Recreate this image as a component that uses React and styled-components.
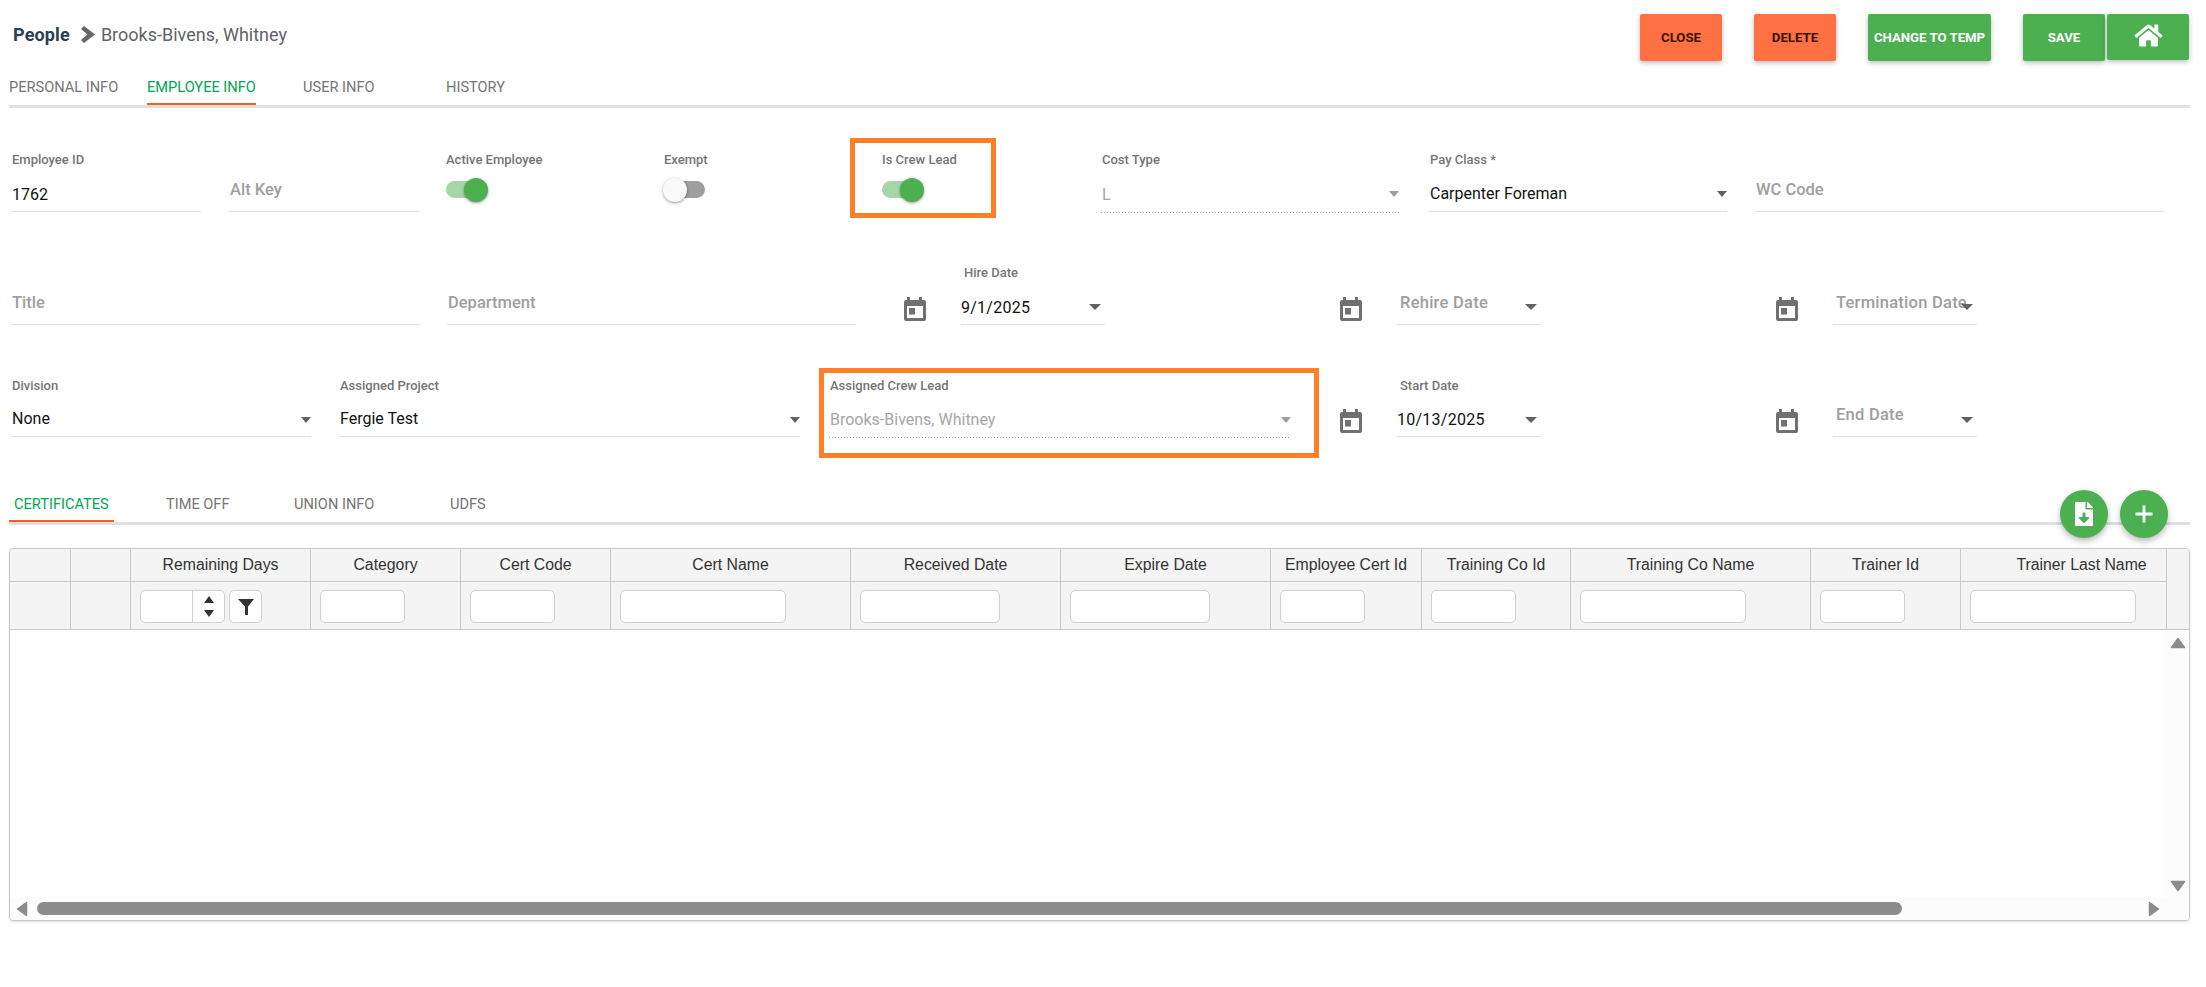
import React from 'react';
import styled, { createGlobalStyle } from 'styled-components';
import { FaHome, FaFileDownload } from 'react-icons/fa';

const Global = createGlobalStyle`
  html, body { margin: 0; padding: 0; background: #fff; }
  body { font-family: Roboto, "Liberation Sans", sans-serif; color: #212121; }
  * { box-sizing: border-box; }
`;

const Page = styled.div`
  width: 2206px;
  height: 987px;
  overflow: hidden;
  background: #fff;
`;

const Header = styled.header`
  display: flex;
  justify-content: space-between;
  height: 70px;
  padding: 14px 17px 0 13px;
`;
const Crumb = styled.div`
  display: flex;
  align-items: center;
  height: 40px;
  font-size: 18px;
  color: #5f6368;
`;
const CrumbArrow = styled.svg`
  width: 14px;
  height: 17px;
  margin: 1px 6px 0 11px;
  fill: #666;
`;
const CrumbRoot = styled.b`
  color: #2c3e50;
  font-weight: 700;
  letter-spacing: .15px;
`;
const Actions = styled.div`
  display: flex;
  align-items: flex-start;
`;
const Btn = styled.button`
  width: ${p => p.$w}px;
  height: ${p => p.$h || 47}px;
  margin-left: ${p => p.$ml}px;
  border: 0;
  border-radius: 2px;
  padding: 0;
  display: flex;
  align-items: center;
  justify-content: center;
  background: ${p => (p.$danger ? '#ff7043' : '#4caf50')};
  color: ${p => (p.$danger ? '#3a1208' : '#fff')};
  font: 700 13.2px Roboto, sans-serif;
  text-transform: uppercase;
  box-shadow: 0 2px 5px rgba(0,0,0,.26);
`;
const HomeIcon = styled(FaHome)`
  width: 31px;
  height: 25px;
  margin-bottom: 4px;
`;

const TabBar = styled.nav`
  position: relative;
  display: flex;
  height: ${p => p.$h}px;
  margin-left: 9px;
  width: 2181px;
  border-bottom: 3px solid #e0e0e0;
`;
const Tab = styled.div`
  width: ${p => p.$w}px;
  flex: none;
  height: ${p => p.$h}px;
  line-height: ${p => p.$lh}px;
  font-size: 14.6px;
  white-space: nowrap;
  color: ${p => (p.$active ? '#00a651' : '#757575')};
`;
const TabLabel = styled.span`
  display: inline-block;
  height: 100%;
  padding: 0 ${p => p.$pad || 0}px;
  border-bottom: ${p => (p.$active ? '2px solid #ff5a1f' : '0')};
`;

const Form = styled.section`
  padding-top: 30px;
`;
const Row = styled.div`
  display: grid;
  grid-template-columns: ${p => p.$cols};
  height: ${p => p.$h}px;
  margin-top: ${p => p.$mt || 0}px;
  padding-left: 11px;
`;
const Cell = styled.div`
  padding-top: ${p => p.$pt}px;
`;
const Highlight = styled.div`
  width: ${p => p.$w}px;
  height: 100%;
  border: 5px solid #ff7f27;
  padding: ${p => p.$pad};
`;
const Field = styled.div`
  width: ${p => (p.$w ? p.$w + 'px' : '100%')};
  height: 60px;
`;
const Label = styled.div`
  height: 16px;
  line-height: 16px;
  padding-left: ${p => (p.$date ? 3 : 1)}px;
  font-size: 13px;
  font-weight: 500;
  white-space: pre;
  color: #757575;
`;
const Control = styled.div`
  position: relative;
  height: 44px;
  display: flex;
  align-items: flex-end;
  padding: 0 ${p => (p.$date ? 0 : 1)}px ${p => (p.$low ? 7 : 8)}px;
  border-bottom: ${p => (p.$disabled ? '0' : '1.5px solid #e0e0e0')};
  font-size: 16px;
  letter-spacing: ${p => (p.$date ? '.25px' : '0')};
  color: ${p => (p.$disabled ? '#a6a6a6' : '#111')};
  &::after {
    content: ${p => (p.$disabled ? '""' : 'none')};
    position: absolute;
    left: 0;
    right: 0;
    top: 100%;
    height: 1px;
    background: repeating-linear-gradient(to right, #999 0 1px, transparent 1px 3px);
  }
`;
const Placeholder = styled.div`
  font-size: 16.5px;
  font-weight: 500;
  color: #9e9e9e;
  white-space: nowrap;
  position: relative;
  top: -4px;
  left: ${p => (p.$date ? 3 : 0)}px;
`;
const Caret = styled.span`
  position: absolute;
  right: ${p => (p.$date ? 4 : 0)}px;
  top: 23px;
  width: 0;
  height: 0;
  border-left: ${p => (p.$date ? 6 : p.$disabled ? 5 : 5.5)}px solid transparent;
  border-right: ${p => (p.$date ? 6 : p.$disabled ? 5 : 5.5)}px solid transparent;
  border-top: 6px solid ${p => (p.$disabled ? '#9e9e9e' : '#616161')};
`;
const DateIcon = styled.div`
  padding-top: 32px;
  svg { display: block; width: 22px; height: 24px; fill: #707070; }
`;
const ToggleWrap = styled.div`
  position: relative;
  width: 43px;
  height: 24px;
  margin-top: 10px;
`;
const Track = styled.div`
  position: absolute;
  left: 1px;
  right: 1px;
  top: 3px;
  height: 17px;
  border-radius: 9px;
  background: ${p => (p.$on ? '#a5d6a7' : '#9e9e9e')};
`;
const Thumb = styled.div`
  position: absolute;
  top: 0;
  ${p => (p.$on ? 'right: 0;' : 'left: 0;')}
  width: 24px;
  height: 24px;
  border-radius: 50%;
  background: ${p => (p.$on ? '#4caf50' : '#fafafa')};
  box-shadow: 0 1px 3px rgba(0,0,0,.4);
`;
const ThirdRow = styled(Row)`
  ${Label} { padding-top: 1px; height: 17px; }
  ${Control} { height: 43px; }
`;

const SubArea = styled.div`
  position: relative;
  margin-top: 27px;
`;
const Fabs = styled.div`
  position: absolute;
  right: 38px;
  top: 5px;
  display: flex;
  gap: 12px;
`;
const Fab = styled.button`
  width: 48px;
  height: 48px;
  border: 0;
  padding: 0;
  border-radius: 50%;
  background: #4caf50;
  color: #fff;
  display: flex;
  align-items: center;
  justify-content: center;
  box-shadow: 0 3px 6px rgba(0,0,0,.28);
`;

const GridBox = styled.div`
  width: 2181px;
  height: 373px;
  margin: 23px 0 0 9px;
  border: 1px solid #c8c8c8;
  border-radius: 4px;
  display: flex;
  flex-direction: column;
  overflow: hidden;
  box-shadow: 0 1px 2px rgba(0,0,0,.12);
  font-family: "Liberation Sans", Arial, sans-serif;
`;
const COLS = '61px 60px 180px 150px 150px 240px 210px 210px 151px 149px 240px 150px 206px 1fr';
const HeadRow = styled.div`
  display: grid;
  grid-template-columns: ${COLS};
  height: ${p => p.$h}px;
  background: #f4f4f4;
`;
const HeadCell = styled.div`
  display: flex;
  align-items: center;
  justify-content: ${p => (p.$filter ? 'flex-start' : 'center')};
  gap: 4px;
  padding: ${p => (p.$filter ? '2px 0 0 9px' : p.$pl ? `0 0 0 ${p.$pl}px` : '0')};
  font-size: 15.8px;
  color: #333;
  border-right: ${p => (p.$last ? '0' : '1px solid #c8c8c8')};
  border-bottom: ${p => (p.$last ? '0' : '1px solid #c8c8c8')};
  white-space: nowrap;
`;
const FilterInput = styled.div`
  width: ${p => p.$w}px;
  height: 33px;
  flex: none;
  background: #fff;
  border: 1px solid #d0d0d0;
  border-radius: 5px;
  display: flex;
  justify-content: flex-end;
`;
const Spin = styled.div`
  width: 32px;
  height: 100%;
  border-left: 1px solid #d0d0d0;
  display: flex;
  flex-direction: column;
  align-items: center;
  justify-content: center;
  gap: 7px;
`;
const SpinArrow = styled.span`
  width: 0;
  height: 0;
  border-left: 5px solid transparent;
  border-right: 5px solid transparent;
  ${p => (p.$up ? 'border-bottom: 7px solid #333;' : 'border-top: 7px solid #333;')}
`;
const FilterBtn = styled.div`
  width: 33px;
  height: 33px;
  flex: none;
  background: #fff;
  border: 1px solid #d0d0d0;
  border-radius: 5px;
  display: flex;
  align-items: center;
  justify-content: center;
  svg { width: 16px; height: 16px; fill: #333; }
`;
const Body = styled.div`
  flex: 1;
  display: flex;
  border-top: 1px solid #c8c8c8;
  margin-top: -1px;
  min-height: 0;
`;
const Rows = styled.div`
  flex: 1;
  background: #fff;
`;
const VScroll = styled.div`
  width: 23px;
  background: #fcfcfc;
  display: flex;
  flex-direction: column;
  justify-content: space-between;
  align-items: center;
  padding: 7px 0 5px;
`;
const HScroll = styled.div`
  height: 23px;
  background: #fcfcfc;
  display: flex;
  align-items: center;
  padding: 0 29px 0 6px;
  gap: 9px;
`;
const HThumb = styled.div`
  width: 1865px;
  height: 13px;
  border-radius: 7px;
  background: #8c8c8c;
`;
const Arrow = styled.svg`
  display: block;
  fill: #8c8c8c;
  stroke: #8c8c8c;
  stroke-width: 1.5;
  stroke-linejoin: round;
  margin-left: ${p => (p.$auto ? 'auto' : '0')};
`;

const Today = () => (
  <svg viewBox="0 0 22 24">
    <path fillRule="evenodd" d="M3 3V0h3v3h9V0h3v3h2a2 2 0 0 1 2 2v17a2 2 0 0 1-2 2H2a2 2 0 0 1-2-2V5a2 2 0 0 1 2-2h1zM3 9v12h16V9H3z" />
    <path d="M5 11h6v6.5H5z" />
  </svg>
);

const Toggle = ({ on }) => (
  <ToggleWrap>
    <Track $on={on} />
    <Thumb $on={on} />
  </ToggleWrap>
);

const Text = ({ label, value, ph, w, caret, disabled, date, low }) => (
  <Field $w={w}>
    <Label $date={date}>{label}</Label>
    <Control $disabled={disabled} $date={date} $low={low}>
      {ph ? <Placeholder $date={date}>{ph}</Placeholder> : value}
      {caret && <Caret $disabled={disabled} $date={date} />}
    </Control>
  </Field>
);

const cells = [
  { t: '' }, { t: '' },
  { t: 'Remaining Days', w: 0 }, { t: 'Category', w: 85 }, { t: 'Cert Code', w: 85 },
  { t: 'Cert Name', w: 166 }, { t: 'Received Date', w: 140 }, { t: 'Expire Date', w: 140 },
  { t: 'Employee Cert Id', w: 85 }, { t: 'Training Co Id', w: 85 }, { t: 'Training Co Name', w: 166 },
  { t: 'Trainer Id', w: 85 }, { t: 'Trainer Last Name', w: 166, pl: 36 },
];

export default function App() {
  return (
    <Page>
      <Global />
      <Header>
        <Crumb>
          <CrumbRoot>People</CrumbRoot>
          <CrumbArrow viewBox="0 0 14 17"><path d="M0 3l3-3 11 8.5L3 17l-3-3 6.5-5.5z" /></CrumbArrow>
          Brooks-Bivens, Whitney
        </Crumb>
        <Actions>
          <Btn $danger $w={82} $ml={0}>Close</Btn>
          <Btn $danger $w={82} $ml={32}>Delete</Btn>
          <Btn $w={123} $ml={32}>Change to Temp</Btn>
          <Btn $w={82} $ml={32}>Save</Btn>
          <Btn $w={82} $ml={2} $h={46}><HomeIcon /></Btn>
        </Actions>
      </Header>

      <TabBar $h={38}>
        <Tab $w={138} $h={35} $lh={34}><TabLabel>PERSONAL INFO</TabLabel></Tab>
        <Tab $w={156} $h={35} $lh={34} $active><TabLabel $active>EMPLOYEE INFO</TabLabel></Tab>
        <Tab $w={143} $h={35} $lh={34}><TabLabel>USER INFO</TabLabel></Tab>
        <Tab $w={100} $h={35} $lh={34}><TabLabel>HISTORY</TabLabel></Tab>
      </TabBar>

      <Form>
        <Row $h={80} $cols="218px 216px 218px 187px 251px 328px 326px 409px">
          <Cell $pt={14}><Text label="Employee ID" value="1762" w={190} low /></Cell>
          <Cell $pt={14}><Text label=" " ph="Alt Key" w={190} /></Cell>
          <Cell $pt={14}><Field><Label>Active Employee</Label><Toggle on /></Field></Cell>
          <Cell $pt={14}><Field><Label>Exempt</Label><Toggle /></Field></Cell>
          <Highlight $w={146} $pad="9px 0 0 26px"><Field><Label>Is Crew Lead</Label><Toggle on /></Field></Highlight>
          <Cell $pt={14}><Text label="Cost Type" value="L" w={298} caret disabled /></Cell>
          <Cell $pt={14}><Text label="Pay Class *" value="Carpenter Foreman" w={298} caret /></Cell>
          <Cell $pt={14}><Text label=" " ph="WC Code" w={409} /></Cell>
        </Row>

        <Row $h={60} $mt={47} $cols="436px 457px 57px 379px 57px 379px 57px 144px">
          <Text label=" " ph="Title" w={409} />
          <Text label=" " ph="Department" w={409} />
          <DateIcon><Today /></DateIcon>
          <Text label="Hire Date" value="9/1/2025" w={144} caret date low />
          <DateIcon><Today /></DateIcon>
          <Text label=" " ph="Rehire Date" w={144} caret date />
          <DateIcon><Today /></DateIcon>
          <Text label=" " ph="Termination Date" w={144} caret date />
        </Row>

        <ThirdRow $h={90} $mt={43} $cols="328px 480px 521px 57px 379px 57px 144px">
          <Cell $pt={9}><Text label="Division" value="None" w={300} caret /></Cell>
          <Cell $pt={9}><Text label="Assigned Project" value="Fergie Test" w={461} caret /></Cell>
          <Highlight $w={500} $pad="4px 0 0 5px">
            <Text label="Assigned Crew Lead" value="Brooks-Bivens, Whitney" w={462} caret disabled />
          </Highlight>
          <Cell $pt={9}><DateIcon><Today /></DateIcon></Cell>
          <Cell $pt={9}><Text label="Start Date" value="10/13/2025" w={144} caret date low /></Cell>
          <Cell $pt={9}><DateIcon><Today /></DateIcon></Cell>
          <Cell $pt={9}><Text label=" " ph="End Date" w={144} caret date /></Cell>
        </ThirdRow>
      </Form>

      <SubArea>
        <TabBar $h={40}>
          <Tab $w={157} $h={37} $lh={38} $active><TabLabel $active $pad={5}>CERTIFICATES</TabLabel></Tab>
          <Tab $w={128} $h={37} $lh={38}><TabLabel>TIME OFF</TabLabel></Tab>
          <Tab $w={156} $h={37} $lh={38}><TabLabel>UNION INFO</TabLabel></Tab>
          <Tab $w={100} $h={37} $lh={38}><TabLabel>UDFS</TabLabel></Tab>
        </TabBar>
        <Fabs>
          <Fab><FaFileDownload size={24} /></Fab>
          <Fab>
            <svg width="24" height="24" viewBox="0 0 24 24" fill="none" stroke="currentColor" strokeWidth="2.8"><path d="M12 3.5v17M3.5 12h17" /></svg>
          </Fab>
        </Fabs>
      </SubArea>

      <GridBox>
        <HeadRow $h={33}>
          {cells.map((c, i) => <HeadCell key={i} $pl={c.pl}>{c.t}</HeadCell>)}
          <HeadCell $last />
        </HeadRow>
        <HeadRow $h={48}>
          {cells.map((c, i) => (
            <HeadCell key={i} $filter>
              {c.w > 0 && <FilterInput $w={c.w} />}
              {c.w === 0 && (
                <>
                  <FilterInput $w={85}>
                    <Spin><SpinArrow $up /><SpinArrow /></Spin>
                  </FilterInput>
                  <FilterBtn>
                    <svg viewBox="0 0 16 16"><path d="M0 0h16L10 7.5V16H7V7.5z" /></svg>
                  </FilterBtn>
                </>
              )}
            </HeadCell>
          ))}
          <HeadCell $last />
        </HeadRow>
        <Body>
          <Rows />
          <VScroll>
            <Arrow width="16" height="12" viewBox="0 0 16 12"><path d="M8 1.5 L14.5 10.5 H1.5 Z" /></Arrow>
            <Arrow width="16" height="12" viewBox="0 0 16 12"><path d="M8 10.5 L14.5 1.5 H1.5 Z" /></Arrow>
          </VScroll>
        </Body>
        <HScroll>
          <Arrow width="12" height="16" viewBox="0 0 12 16"><path d="M1.5 8 L10.5 1.5 V14.5 Z" /></Arrow>
          <HThumb />
          <Arrow $auto width="12" height="16" viewBox="0 0 12 16"><path d="M10.5 8 L1.5 1.5 V14.5 Z" /></Arrow>
        </HScroll>
      </GridBox>
    </Page>
  );
}
